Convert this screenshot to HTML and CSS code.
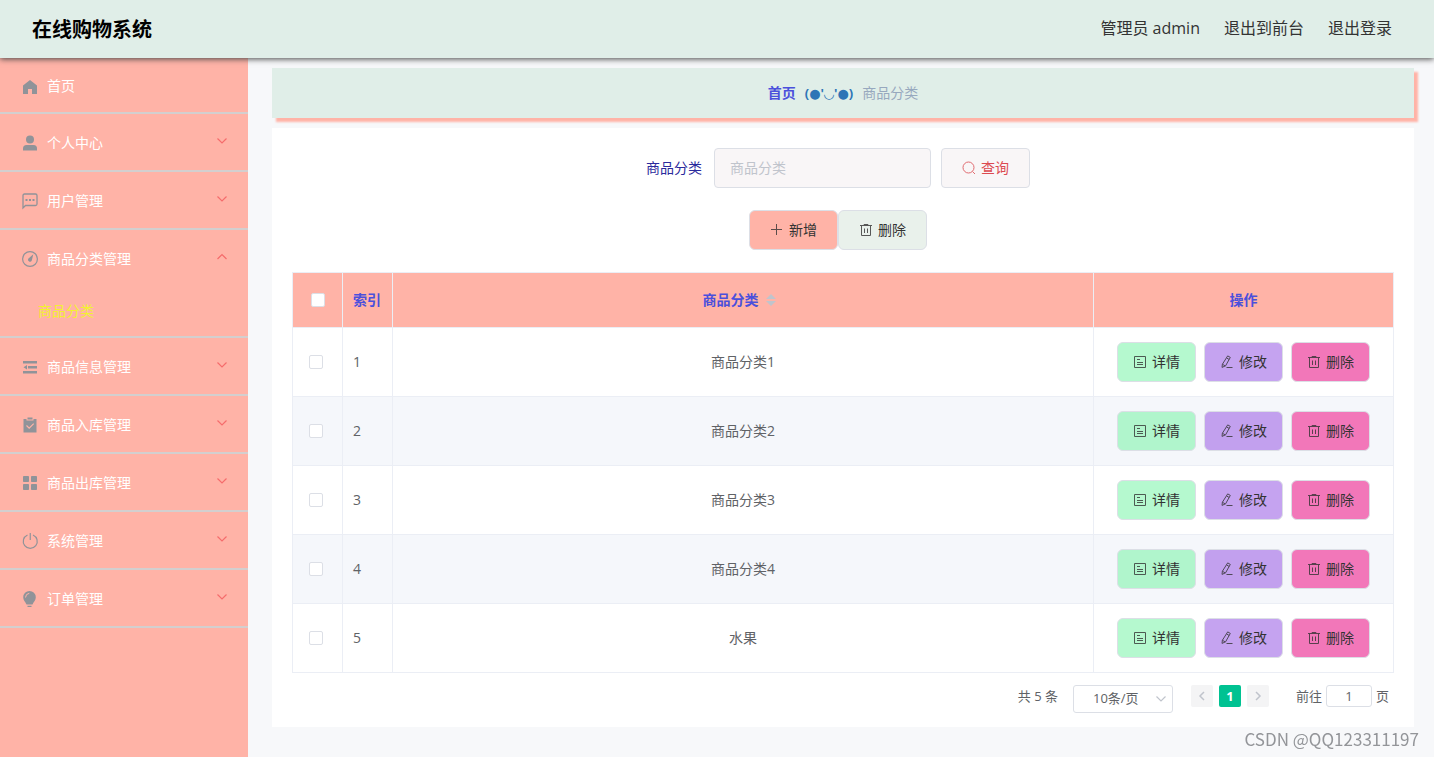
FILE: index.html
```html
<!DOCTYPE html>
<html lang="zh-CN">
<head>
<meta charset="utf-8">
<title>在线购物系统</title>
<link rel="stylesheet" href="styles.css">
</head>
<body>
<svg class="sprite" aria-hidden="true">
  <symbol id="down" viewBox="0 0 12 12"><path d="M1.500 3.500 6 8l4.500-4.500" fill="none" stroke="currentColor" stroke-width="1.200"/></symbol>
  <symbol id="up" viewBox="0 0 12 12"><path d="M1.500 8 6 3.500 10.500 8" fill="none" stroke="currentColor" stroke-width="1.200"/></symbol>
  <symbol id="trash" viewBox="0 0 14 14"><path d="M1 2.500h12M2.500 2.500v10h9v-10M5 2.500v-1h4v1M5.500 5.500v4.500M8.500 5.500v4.500" fill="none" stroke="currentColor"/></symbol>
  <symbol id="doc" viewBox="0 0 14 14"><path d="M1.500 1.500h11v11h-11zM4 4.500h3M4 7.500h6M4 9.500h6" fill="none" stroke="currentColor"/></symbol>
  <symbol id="edit" viewBox="0 0 14 14"><path d="M7.700.9 10.300 2.400 5.600 10.800 2 12.400 2.400 9.200zM6.700 3l2.500 1.500M2.400 9.300l2.900 1.600M6.500 12.500h6" fill="none" stroke="currentColor"/></symbol>
</svg>
<header class="header">
  <h1 class="brand">在线购物系统</h1>
  <nav class="header-nav">
    <span>管理员 admin</span>
    <a href="#">退出到前台</a>
    <a href="#">退出登录</a>
  </nav>
</header>
<div class="layout">
  <nav class="sidebar">
    <ul class="menu">
      <li><a class="menu-item" href="#"><svg class="menu-icon" viewBox="0 0 18 18"><path d="M9 3 2 8.500V17h5v-5h4v5h5V8.500z"/></svg><span>首页</span></a></li>
      <li><button class="menu-item"><svg class="menu-icon" viewBox="0 0 18 18"><circle cx="9" cy="5.500" r="4"/><path d="M2 16.500v-2Q2 11 5.500 11h7q3.500 0 3.500 3.500v2z"/></svg><span>个人中心</span><svg class="arrow"><use href="#down"/></svg></button></li>
      <li><button class="menu-item"><svg class="menu-icon" viewBox="0 0 18 18"><path d="M2 16V3.500q0-1.500 1.500-1.500h11Q16 2 16 3.500v8.500q0 1.500-1.500 1.500H4.500z" fill="none" stroke="currentColor" stroke-width="1.300"/><path d="M4.500 7h2v2h-2zM8 7h2v2H8zM11.500 7h2v2h-2z"/></svg><span>用户管理</span><svg class="arrow"><use href="#down"/></svg></button></li>
      <li><button class="menu-item"><svg class="menu-icon" viewBox="0 0 18 18"><circle cx="9" cy="9" r="7.400" fill="none" stroke="currentColor" stroke-width="1.200"/><path d="M12.300 4.300 10.800 10.600a2 2 0 0 1-3.600-1.800z"/></svg><span>商品分类管理</span><svg class="arrow"><use href="#up"/></svg></button>
        <ul class="submenu"><li><a class="submenu-item" href="#">商品分类</a></li></ul></li>
      <li><button class="menu-item"><svg class="menu-icon" viewBox="0 0 18 18"><path d="M2 3h14v2.500H2zM7 8h9v2.500H7zM2 13h14v2.500H2zM6 7v4.500L2.500 9.250z"/></svg><span>商品信息管理</span><svg class="arrow"><use href="#down"/></svg></button></li>
      <li><button class="menu-item"><svg class="menu-icon" viewBox="0 0 18 18"><path d="M3 3h2.500v1.500h7V3H15.500v13.500H2.500V3zM6.500 1.500h5v2h-5z"/><path d="m5.500 9.500 2.700 2.700 4.500-4.500" fill="none" stroke="#ffb3a7" stroke-width="1.200"/></svg><span>商品入库管理</span><svg class="arrow"><use href="#down"/></svg></button></li>
      <li><button class="menu-item"><svg class="menu-icon" viewBox="0 0 18 18"><rect x="2" y="2" width="6" height="6" rx=".8"/><rect x="10" y="2" width="6" height="6" rx=".8"/><rect x="2" y="10" width="6" height="6" rx=".8"/><rect x="10" y="10" width="6" height="6" rx=".8"/></svg><span>商品出库管理</span><svg class="arrow"><use href="#down"/></svg></button></li>
      <li><button class="menu-item"><svg class="menu-icon" viewBox="0 0 18 18"><path d="M6.500 3a7 7 0 1 0 5.500 0M9.250 1v7" fill="none" stroke="currentColor" stroke-width="1.200"/></svg><span>系统管理</span><svg class="arrow"><use href="#down"/></svg></button></li>
      <li><button class="menu-item"><svg class="menu-icon" viewBox="0 0 18 18"><path d="M8.500 1a6.300 6.300 0 0 1 6.300 6.300c0 3-2 4.300-3.300 7.200h-6C4.200 11.600 2.200 10.300 2.200 7.300A6.300 6.300 0 0 1 8.500 1zM6.500 15.800h4v1.200h-4z"/><path d="M4.500 7.500Q4.700 3.700 8.300 3.300" fill="none" stroke="#ffb3a7"/></svg><span>订单管理</span><svg class="arrow"><use href="#down"/></svg></button></li>
    </ul>
  </nav>
  <main class="main">
    <nav class="breadcrumb"><a class="crumb-home" href="#">首页</a><span class="crumb-sep">(●'◡'●)</span><span>商品分类</span></nav>
    <section class="card">
      <form class="search">
        <label class="search-label" for="category">商品分类</label>
        <input class="search-input" id="category" type="text" placeholder="商品分类">
        <button class="btn btn-search" type="button"><svg class="icon" viewBox="0 0 14 14"><circle cx="6.500" cy="6.500" r="5.500" fill="none" stroke="currentColor"/><path d="m10.500 10.500 2.500 2.500" stroke="currentColor"/></svg>查询</button>
      </form>
      <div class="toolbar">
        <button class="btn btn-add"><svg class="icon" viewBox="0 0 14 14"><path d="M6.500 1v11M1 6.500h11" stroke="currentColor"/></svg>新增</button>
        <button class="btn btn-remove"><svg class="icon"><use href="#trash"/></svg>删除</button>
      </div>
      <table class="table">
        <colgroup><col class="col-small"><col class="col-small"><col><col class="col-actions"></colgroup>
        <thead><tr>
          <th class="check-head"><input class="check" type="checkbox" aria-label="全选"></th>
          <th class="left">索引</th>
          <th class="sortable"><button class="sort">商品分类<svg class="sort-icon" viewBox="0 0 10 14"><path d="M5 1l5 5H0zM0 8h10l-5 5z"/></svg></button></th>
          <th>操作</th>
        </tr></thead>
        <tbody id="rows"></tbody>
      </table>
      <div class="pagination">
        <span>共 5 条</span>
        <div class="size-box"><select class="size" aria-label="每页条数"><option>10条/页</option></select><svg class="size-arrow"><use href="#down"/></svg></div>
        <div class="pager">
          <button class="page" aria-label="上一页"><svg viewBox="0 0 10 10"><path d="M7 1 3 5l4 4" fill="none" stroke="currentColor" stroke-width="1.500"/></svg></button>
          <button class="page page-current">1</button>
          <button class="page" aria-label="下一页"><svg viewBox="0 0 10 10"><path d="m3 1 4 4-4 4" fill="none" stroke="currentColor" stroke-width="1.500"/></svg></button>
        </div>
        <label class="jump">前往<input class="jump-input" type="text" value="1">页</label>
      </div>
    </section>
  </main>
</div>
<div class="watermark">CSDN @QQ123311197</div>
<script src="app.js"></script>
</body>
</html>
```

FILE: styles.css
```css
* { box-sizing: border-box; }

body {
  margin: 0;
  min-height: 100vh;
  display: flex;
  flex-direction: column;
  background: #f7f8fa;
  color: #606266;
  font: 14px/20px "Open Sans", "Noto Sans CJK SC", sans-serif;
}

button, input, select { font: inherit; color: inherit; margin: 0; }
button { cursor: pointer; }
a { color: inherit; text-decoration: none; }
ul { list-style: none; margin: 0; padding: 0; }
.sprite { position: absolute; width: 0; height: 0; }

.header {
  position: relative;
  z-index: 1;
  display: flex;
  align-items: center;
  justify-content: space-between;
  height: 58px;
  padding: 0 42px 0 32px;
  background: #e0eee8;
  box-shadow: 0 1px 6px #444;
  color: #333;
  font-size: 16px;
}
.brand { margin: 0; padding-top: 2px; color: #000; font-size: 20px; line-height: 28px; font-weight: 700; }
.header-nav { display: flex; gap: 24px; padding-bottom: 2px; }

.layout { flex: 1; display: flex; }
.sidebar { flex: 0 0 248px; background: #ffb3a7; }
.menu > li { border-bottom: 2px solid #d3cfcf; }
.menu-item {
  display: flex;
  align-items: center;
  width: 100%;
  height: 56px;
  padding: 2px 20px 0 21px;
  border: 0;
  background: none;
  color: #fff;
  text-align: left;
}
.menu > li:first-child .menu-item { height: 54px; }
.menu-icon { width: 18px; height: 18px; margin-right: 8px; color: #909399; fill: currentColor; }
.arrow { width: 12px; height: 12px; margin: 0 0 4px auto; color: #f56c6c; }
.submenu-item {
  display: block;
  padding: 0 38px;
  color: #f2f230;
  line-height: 50px;
}

.main { flex: 1; min-width: 0; padding: 10px 20px 30px 24px; }
.breadcrumb {
  display: flex;
  align-items: center;
  justify-content: center;
  gap: 9px;
  height: 50px;
  background: #e0eee8;
  box-shadow: 4px 4px 2px #ffb3a7;
  color: #97a8be;
}
.crumb-home { color: #4b50dc; font-weight: 700; }
.crumb-sep { color: #2e75b6; font-family: "Open Sans", "DejaVu Sans", sans-serif; font-size: 13px; font-weight: 700; }

.card { position: relative; margin-top: 10px; padding: 20px 20px 14px; background: #fff; }
.search, .toolbar { display: flex; justify-content: center; padding-right: 10px; }
.search { align-items: center; }
.search-label { margin-right: 12px; color: #2a2a9c; }
.search-input {
  width: 217px;
  height: 40px;
  margin-right: 10px;
  padding: 0 15px 2px;
  border: 1px solid #dcdfe6;
  border-radius: 4px;
  background: #f9f6f7;
}
.search-input::placeholder { color: #c0c4cc; }
.btn {
  display: flex;
  align-items: center;
  justify-content: center;
  gap: 5px;
  width: 89px;
  height: 40px;
  padding: 0;
  border: 1px solid #dcdfe6;
  border-radius: 6px;
  color: #333;
}
.icon { width: 14px; height: 14px; opacity: .8; }
.btn-search { border-radius: 4px; background: #f9f6f7; color: #dc4a50; }
.toolbar { margin: 22px 0; }
.btn-add { background: #ffb3a7; }
.btn-remove { background: #e9f1eb; }

.table {
  width: 100%;
  table-layout: fixed;
  border-collapse: collapse;
  text-align: center;
}
.table th, .table td { border: 1px solid #ebeef5; padding: 0 10px; }
.table th { height: 55px; background: #ffb3a7; color: #4b50dc; font-weight: 700; }
.table td { height: 69px; }
.table tbody tr:nth-child(even) { background: #f5f7fb; }
.table .left { text-align: left; }
.table .check-cell { padding: 0 14px 0 10px; }
.table .sortable { padding-right: 18px; }
.col-small { width: 50px; }
.col-actions { width: 300px; }
.check {
  appearance: none;
  display: block;
  width: 14px;
  height: 14px;
  margin: 0 auto;
  border: 1px solid #dcdfe6;
  border-radius: 2px;
  background: #fff;
}
.sort {
  display: inline-flex;
  align-items: center;
  gap: 7px;
  padding: 0;
  border: 0;
  background: none;
}
.sort-icon { width: 10px; height: 14px; fill: #c0c4cc; }
.actions { display: flex; justify-content: center; gap: 8px; }
.actions .btn { width: 79px; }
.btn-detail { background: #b5f9cf; }
.btn-edit { background: #c5a3f0; }
.btn-delete { background: #f277b9; }
.table tbody tr:nth-child(even) .btn-detail { background: #b0f5cc; }
.table tbody tr:nth-child(even) .btn-edit { background: #c2a0ee; }

.pagination {
  display: flex;
  align-items: flex-start;
  justify-content: flex-end;
  margin-top: 12px;
  padding-right: 5px;
  font-size: 13px;
  line-height: 22px;
}
.size-box { position: relative; margin: 0 18px 0 15px; }
.size {
  appearance: none;
  display: block;
  width: 100px;
  height: 28px;
  padding: 0 19px 2px;
  border: 1px solid #dcdfe6;
  border-radius: 3px;
  background: #fff;
}
.size-arrow { position: absolute; top: 8px; right: 6px; width: 12px; height: 12px; color: #c0c4cc; pointer-events: none; }
.pager { display: flex; gap: 6px; margin-right: 27px; }
.page {
  display: flex;
  align-items: center;
  justify-content: center;
  width: 22px;
  height: 22px;
  padding: 0;
  border: 0;
  border-radius: 2px;
  background: #f4f4f5;
  color: #c0c4cc;
}
.page svg { width: 10px; height: 10px; }
.page-current { background: #00c292; color: #fff; font-weight: 700; }
.jump { display: flex; gap: 4px; }
.jump-input {
  width: 46px;
  height: 22px;
  padding: 0;
  border: 1px solid #dcdfe6;
  border-radius: 3px;
  background: #fff;
  text-align: center;
}
.watermark {
  position: fixed;
  right: 15px;
  bottom: 7px;
  color: #939599;
  font-family: "Noto Sans CJK SC", sans-serif;
  font-size: 17px;
  line-height: 22px;
}
```

FILE: app.js
```js
const names = ["商品分类1", "商品分类2", "商品分类3", "商品分类4", "水果"];
const button = (kind, icon, text) =>
  `<button class="btn btn-${kind}"><svg class="icon"><use href="#${icon}"/></svg>${text}</button>`;

document.getElementById("rows").innerHTML = names.map((name, i) => `
  <tr>
    <td class="check-cell"><input class="check" type="checkbox" aria-label="选择 ${name}"></td>
    <td class="left">${i + 1}</td>
    <td>${name}</td>
    <td><div class="actions">
      ${button("detail", "doc", "详情")}${button("edit", "edit", "修改")}${button("delete", "trash", "删除")}
    </div></td>
  </tr>`).join("");
```
